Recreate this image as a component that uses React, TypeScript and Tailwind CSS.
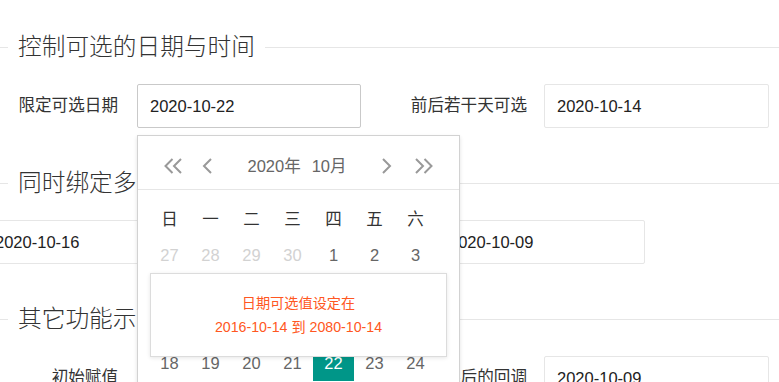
import React from "react"

const Legend = ({ title, className = "" }: { title: string; className?: string }) => (
  <div className={`flex h-[30px] items-center ${className}`}>
    <div className="h-px w-[8px] bg-[#e6e6e6]" />
    <span className="whitespace-nowrap px-[10px] text-[23.7px] font-light leading-[30px] text-[#333]">{title}</span>
    <div className="h-px flex-1 bg-[#e6e6e6]" />
  </div>
)

const Field = ({ value, className = "" }: { value: string; className?: string }) => (
  <input
    readOnly
    defaultValue={value}
    className={`h-[44px] shrink-0 rounded-[2px] border bg-white px-[12px] text-[16.5px] text-[#222] outline-none ${className}`}
  />
)

const Chevron = ({ double, dir }: { double?: boolean; dir: "l" | "r" }) => {
  const d = double
    ? dir === "l"
      ? "M9.5 1 L2.5 8 L9.5 15 M18 1 L11 8 L18 15"
      : "M2 1 L9 8 L2 15 M10.5 1 L17.5 8 L10.5 15"
    : dir === "l"
      ? "M9 1 L2 8 L9 15"
      : "M2 1 L9 8 L2 15"
  const w = double ? 20 : 11
  return (
    <svg width={w} height="16" viewBox={`0 0 ${w} 16`} fill="none" stroke="#999" strokeWidth="2" strokeLinejoin="miter">
      <path d={d} />
    </svg>
  )
}

const weeks = ["日", "一", "二", "三", "四", "五", "六"]
const rows = [
  [27, 28, 29, 30, 1, 2, 3],
  [4, 5, 6, 7, 8, 9, 10],
  [11, 12, 13, 14, 15, 16, 17],
  [18, 19, 20, 21, 22, 23, 24],
  [25, 26, 27, 28, 29, 30, 31],
]

const Calendar = () => (
  <div className="absolute left-[137px] top-[135px] z-10 w-[323px] border border-[#d2d2d2] bg-white shadow-[0_2px_4px_rgba(0,0,0,0.12)]">
    <div className="flex h-[54px] items-start border-b border-[#e6e6e6] pl-[25px] pr-[25px] pt-[12px]">
      <div className="flex h-[36px] w-[20px] items-center"><Chevron double dir="l" /></div>
      <div className="ml-[19px] flex h-[36px] w-[11px] items-center"><Chevron dir="l" /></div>
      <div className="flex h-[36px] flex-1 items-center justify-center text-[16.5px] text-[#666]">
        <span>2020年</span>
        <span className="ml-[11px]">10月</span>
      </div>
      <div className="flex h-[36px] w-[11px] items-center"><Chevron dir="r" /></div>
      <div className="ml-[22px] flex h-[36px] w-[20px] items-center"><Chevron double dir="r" /></div>
    </div>
    <div className="relative pb-[12px] pl-[11px] pt-[12px]">
      <div className="grid h-[35px] grid-cols-[repeat(7,41px)] items-center text-center text-[16.5px] text-[#333]">
        {weeks.map((w) => (
          <span key={w}>{w}</span>
        ))}
      </div>
      {rows.map((r, i) => (
        <div key={i} className="grid h-[36px] grid-cols-[repeat(7,41px)] text-center text-[16.5px]">
          {r.map((d, j) => {
            const faded = i === 0 && d > 20
            const active = i === 3 && d === 22
            return (
              <span
                key={j}
                className={`flex items-center justify-center ${
                  active ? "bg-[#009688] text-white" : faded ? "text-[#d2d2d2]" : "text-[#666]"
                }`}
              >
                {d}
              </span>
            )
          })}
        </div>
      ))}
      <div className="absolute left-[12px] top-[83px] flex h-[84px] w-[297px] flex-col items-center justify-center border border-[#dcdcdc] bg-white text-[14.2px] leading-[24px] text-[#FF5722] shadow-[0_1px_4px_rgba(0,0,0,0.1)]">
        <span>日期可选值设定在</span>
        <span>2016-10-14 到 2080-10-14</span>
      </div>
    </div>
  </div>
)

export default function App() {
  return (
    <div className="relative h-[382px] w-[779px] overflow-hidden bg-white font-['Liberation_Sans','Noto_Sans_CJK_SC',sans-serif] text-[#333]">
      <div className="pt-[32px]">
        <Legend title="控制可选的日期与时间" />
        <div className="mt-[22px] flex h-[44px] items-center">
          <label className="w-[118px] shrink-0 text-right text-[16.6px]">限定可选日期</label>
          <Field value="2020-10-22" className="ml-[19px] w-[224px] border-[#c9c9c9]" />
          <label className="ml-[24px] w-[142px] shrink-0 text-right text-[16.6px]">前后若干天可选</label>
          <Field value="2020-10-14" className="ml-[17px] w-[225px] border-[#e6e6e6]" />
        </div>

        <Legend title="同时绑定多个" className="mt-[40px]" />
        <div className="mt-[22px] flex h-[44px] items-center">
          <Field value="2020-10-16" className="-ml-[18px] w-[224px] border-[#e6e6e6]" />
          <Field value="2020-10-09" className="ml-[230px] w-[209px] border-[#e6e6e6]" />
        </div>

        <Legend title="其它功能示例" className="mt-[40px]" />
        <div className="mt-[22px] flex h-[44px] items-center">
          <label className="w-[118px] shrink-0 text-right text-[16.6px]">初始赋值</label>
          <Field value="2020-10-10" className="ml-[19px] w-[224px] border-[#e6e6e6]" />
          <label className="ml-[24px] w-[142px] shrink-0 text-right text-[16.6px]">日期切换后的回调</label>
          <Field value="2020-10-09" className="ml-[17px] w-[225px] border-[#e6e6e6]" />
        </div>
      </div>
      <Calendar />
    </div>
  )
}
